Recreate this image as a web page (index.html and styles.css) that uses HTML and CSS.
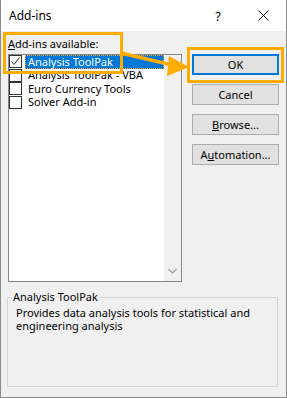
FILE: index.html
```html
<!DOCTYPE html>
<html lang="en">
<head>
  <meta charset="UTF-8">
  <title>Add-ins</title>
  <link rel="stylesheet" href="styles.css">
</head>
<body>
  <div class="window">
    <div class="titlebar">
      <span class="title">Add-ins</span>
      <span class="help">?</span>
      <svg class="close" width="11" height="11" viewBox="0 0 11 11">
        <path d="M0.5 0.5 L10.5 10.5 M10.5 0.5 L0.5 10.5" stroke="#000" stroke-width="1" fill="none"/>
      </svg>
    </div>

    <div class="dialog">
      <div class="main-row">
        <div class="left-col">
          <div class="field-label"><u>A</u>dd-ins available:</div>
          <div class="listbox">
            <div class="items">
              <div class="item">
                <span class="check">
                  <svg width="11" height="11" viewBox="0 0 11 11">
                    <path d="M1.5 5.5 L4 8.5 L9.5 1.5" stroke="#333" stroke-width="1" fill="none"/>
                  </svg>
                </span>
                <span class="item-text selected">Analysis ToolPak</span>
              </div>
              <div class="item">
                <span class="check"></span>
                <span class="item-text">Analysis ToolPak - VBA</span>
              </div>
              <div class="item">
                <span class="check"></span>
                <span class="item-text">Euro Currency Tools</span>
              </div>
              <div class="item">
                <span class="check"></span>
                <span class="item-text">Solver Add-in</span>
              </div>
            </div>
            <div class="scrollbar">
              <svg width="9" height="6" viewBox="0 0 9 6">
                <path d="M0.5 5 L4.5 1 L8.5 5" stroke="#c8c8c8" stroke-width="1.4" fill="none"/>
              </svg>
              <svg width="9" height="6" viewBox="0 0 9 6">
                <path d="M0.5 1 L4.5 5 L8.5 1" stroke="#a6a6a6" stroke-width="1.4" fill="none"/>
              </svg>
            </div>
          </div>
        </div>

        <div class="buttons">
          <div class="btn btn-default">OK</div>
          <div class="btn">Cancel</div>
          <div class="btn"><u>B</u>rowse...</div>
          <div class="btn">A<u>u</u>tomation...</div>
        </div>
      </div>

      <fieldset class="group">
        <legend>Analysis ToolPak</legend>
        <p class="desc">Provides data analysis tools for statistical and engineering analysis</p>
      </fieldset>
    </div>

    <!-- annotation overlay -->
    <div class="mark mark-label"></div>
    <div class="mark mark-ok"></div>
    <svg class="arrow" width="287" height="398" viewBox="0 0 287 398">
      <path d="M121 53 L172 65" stroke="#ffab00" stroke-width="3.5" fill="none"/>
      <polygon points="169,56 189,67 167,76" fill="#ffab00"/>
    </svg>
  </div>
</body>
</html>
```

FILE: styles.css
```css
body {
  margin: 0;
  padding: 0;
  background-color: white;
  font-family: 'Noto Sans', 'Liberation Sans', sans-serif;
  font-size: 11px;
  color: #000;
}
.window {
  position: relative;
  width: 287px;
  height: 398px;
  box-sizing: border-box;
  background-color: #f0f0f0;
  border: 1px solid #8a8a8a;
  border-top: none;
  overflow: hidden;
}
.titlebar {
  height: 31px;
  background-color: white;
  display: flex;
  align-items: center;
  padding-left: 8px;
}
.title {
  font-size: 12px;
  flex: 1;
}
.help {
  font-size: 13px;
  margin-right: 37px;
}
.close {
  margin-right: 17px;
}
.dialog {
  padding: 5px 7px 0 7px;
}
.main-row {
  display: grid;
  grid-template-columns: 174px 87px;
  gap: 10px;
}
.field-label {
  line-height: 16px;
  margin-bottom: 2px;
}
.listbox {
  height: 228px;
  box-sizing: border-box;
  border: 1px solid #828790;
  background-color: white;
  display: flex;
}
.items {
  flex: 1;
}
.item {
  height: 13.5px;
  display: flex;
  align-items: center;
  gap: 3px;
  padding-left: 0;
}
.check {
  width: 13px;
  height: 13px;
  box-sizing: border-box;
  border: 1px solid #333;
  background: white;
  display: flex;
  align-items: center;
  justify-content: center;
}
.item-text {
  line-height: 12px;
  padding: 0 2px;
  border: 1px solid transparent;
  white-space: nowrap;
}
.item-text.selected {
  flex: 1;
  background-color: #0078d7;
  color: white;
  border: 1px dotted #f5a623;
}
.scrollbar {
  width: 17px;
  background-color: #f0f0f0;
  display: flex;
  flex-direction: column;
  justify-content: space-between;
  align-items: center;
  padding: 6px 0 7px 0;
}
.buttons {
  margin-top: 18px;
  display: flex;
  flex-direction: column;
  gap: 9px;
}
.btn {
  height: 21px;
  box-sizing: border-box;
  border: 1px solid #adadad;
  background-color: #e1e1e1;
  display: flex;
  align-items: center;
  justify-content: center;
}
.btn-default {
  border: 2px solid #0078d7;
}
.group {
  margin: 8px 0 0 -1px;
  padding: 0 8px;
  border: 1px solid #d5d5d5;
  width: 271px;
  box-sizing: border-box;
}
.group legend {
  line-height: 14px;
  padding: 0 1px;
  margin-left: -4px;
}
.desc {
  margin: 0;
  padding-top: 2px;
  height: 80px;
  line-height: 13px;
}
.mark {
  position: absolute;
  box-sizing: border-box;
  border: 3px solid #ffab00;
}
.mark-label {
  left: 2px;
  top: 32px;
  width: 120px;
  height: 42px;
}
.mark-ok {
  left: 186px;
  top: 47px;
  width: 97px;
  height: 36px;
}
.arrow {
  position: absolute;
  left: -1px;
  top: 0;
  pointer-events: none;
}
```
